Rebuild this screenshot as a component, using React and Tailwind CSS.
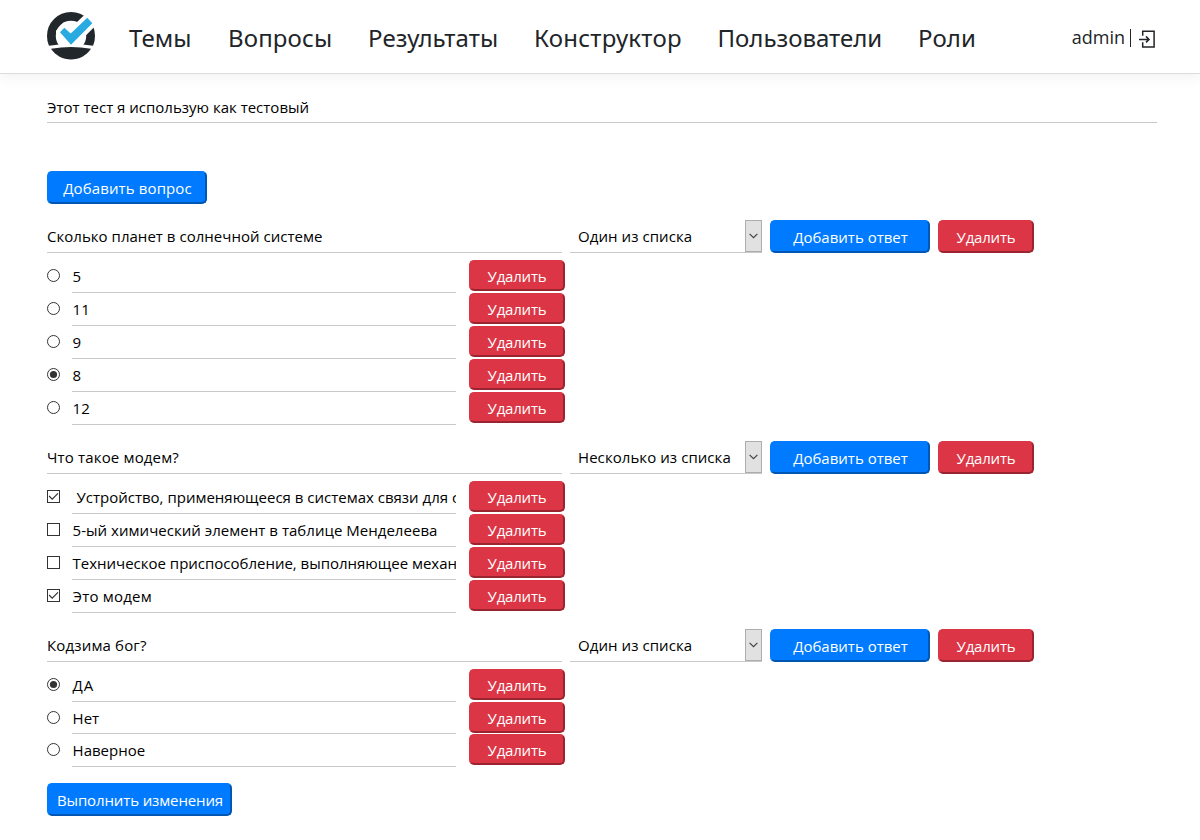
const NAV = [
  { label: 'Темы', cls: 'w-[99px] tracking-[0.1px]' },
  { label: 'Вопросы', cls: 'w-[140px] tracking-[0.15px]' },
  { label: 'Результаты', cls: 'w-[166px] tracking-[0.1px]' },
  { label: 'Конструктор', cls: 'w-[183.5px] tracking-[0.25px]' },
  { label: 'Пользователи', cls: 'w-[200.5px]' },
  { label: 'Роли', cls: 'w-[80px] tracking-[0.1px]' },
];

const QUESTIONS = [
  {
    title: 'Сколько планет в солнечной системе',
    titleCls: 'tracking-[0.03px]',
    type: 'radio',
    kind: 'Один из списка',
    answers: [
      { text: '5' },
      { text: '11' },
      { text: '9' },
      { text: '8', on: true },
      { text: '12' },
    ],
  },
  {
    title: 'Что такое модем?',
    titleCls: 'tracking-[0.16px]',
    type: 'checkbox',
    kind: 'Несколько из списка',
    answers: [
      { text: ' Устройство, применяющееся в системах связи для с', on: true },
      { text: '5-ый химический элемент в таблице Менделеева', cls: 'tracking-[0.03px]' },
      { text: 'Техническое приспособление, выполняющее механ', cls: 'tracking-[-0.01px]' },
      { text: 'Это модем', on: true, cls: 'tracking-[0.2px]' },
    ],
  },
  {
    title: 'Кодзима бог?',
    titleCls: 'tracking-[0.16px]',
    type: 'radio',
    kind: 'Один из списка',
    answers: [
      { text: 'ДА', on: true, cls: 'tracking-[0.8px]' },
      { text: 'Нет', row: 'h-8', cls: 'pt-[2px]' },
      { text: 'Наверное' },
    ],
  },
];

function Logo() {
  return (
    <svg className="mb-px h-12 w-12 shrink-0" viewBox="0 0 48 48">
      <clipPath id="above">
        <rect x="9" y="-4" width="44" height="36" />
      </clipPath>
      <circle cx="24" cy="24" r="19.6" fill="none" stroke="#22272c" strokeWidth="8.8" />
      <path d="M-1 34.3 Q24 29.6 49 34.3 V49 H-1 Z" fill="#fff" />
      <path d="M4 36.8 Q24 33 44 36.8 A24 24 0 0 1 4 36.8 Z" fill="#22272c" />
      <path
        d="M13 20.3 17.3 15.7 23.7 21.6 40.3 5.7 45.3 11.3 24 32.7Z"
        fill="#fff"
        stroke="#fff"
        strokeWidth="8"
        clipPath="url(#above)"
      />
      <path d="M13 20.3 17.3 15.7 23.7 21.4 40.3 5.7 45.3 11.3 24 32.7Z" fill="#29abe2" />
    </svg>
  );
}

function LogoutIcon() {
  return (
    <svg className="mt-[4px] h-[18px] w-4" viewBox="0 0 16 18" fill="none" stroke="#212529" strokeWidth="1.5">
      <path d="M3.7 5.8V1.2H15.1V17.1H3.7V12.2" />
      <path d="M0 9.4H9.8M7 6.4 10 9.4 7 12.4" />
    </svg>
  );
}

function Button({ color = 'blue', className, children }) {
  const tone =
    color === 'red'
      ? 'bg-[#dc3545] border-t-[#dc3545] border-l-[#dc3545] border-r-[#9a2530] border-b-[#9a2530]'
      : 'bg-[#007bff] border-t-[#007bff] border-l-[#007bff] border-r-[#0056b3] border-b-[#0056b3]';
  return (
    <button
      type="button"
      className={`flex shrink-0 items-center justify-center rounded-[5px] border-2 pt-[2px] leading-none whitespace-nowrap text-white ${tone} ${className}`}
    >
      {children}
    </button>
  );
}

function Mark({ type, on }) {
  return (
    <svg className="mt-[9px] h-[13px] w-[13px] shrink-0" viewBox="0 0 13 13" fill="none" stroke="#333">
      {type === 'radio' ? (
        <>
          <circle cx="6.5" cy="6.5" r="6" />
          {on && <circle cx="6.5" cy="6.5" r="3.6" fill="#333" stroke="none" />}
        </>
      ) : (
        <>
          <rect x="0.5" y="0.5" width="12" height="12" />
          {on && <path d="M2.1 6 5.2 9.1 11 3.3" strokeWidth="1.2" />}
        </>
      )}
    </svg>
  );
}

function Select({ value }) {
  return (
    <div className="ml-2 flex h-[33px] w-48 border-b border-[#c8c8c8] pl-2">
      <span className="flex-1 leading-8 tracking-[0.07px] whitespace-nowrap">{value}</span>
      <span className="flex w-[17px] items-center justify-center border border-[#adadad] bg-[#e1e1e1]">
        <svg className="mr-px h-[6px] w-[9px]" viewBox="0 0 9 6" fill="none" stroke="#444" strokeWidth="1.2">
          <path d="M0.6 0.8 4.5 4.7 8.4 0.8" />
        </svg>
      </span>
    </div>
  );
}

function Question({ title, titleCls, type, kind, answers }) {
  return (
    <section className="mb-4">
      <div className="mb-[7px] flex">
        <div className={`h-[33px] w-[515px] border-b border-[#c8c8c8] leading-8 ${titleCls}`}>{title}</div>
        <Select value={kind} />
        <Button className="ml-2 h-[33px] w-40 pl-px">Добавить ответ</Button>
        <Button color="red" className="ml-2 h-[33px] w-24 tracking-[-0.2px]">
          Удалить
        </Button>
      </div>
      {answers.map(({ text, on, row = 'h-[33px]', cls = '' }) => (
        <div key={text} className={`flex ${row}`}>
          <Mark type={type} on={on} />
          <div
            className={`ml-3 flex w-96 items-center overflow-hidden border-b border-[#c8c8c8] pl-[0.6px] whitespace-pre ${cls}`}
          >
            {text}
          </div>
          <Button color="red" className="ml-[13px] h-[31px] w-24 tracking-[-0.2px]">
            Удалить
          </Button>
        </div>
      ))}
    </section>
  );
}

export default function App() {
  return (
    <div className="min-h-[840px] bg-white font-['Open_Sans','Noto_Sans',sans-serif] text-[15px] text-black">
      <header className="flex h-[74px] items-center border-b border-[#dcdcdc] pr-[45px] pl-[47px] text-[#212529] shadow-[0_4px_12px_rgba(0,0,0,0.05)]">
        <Logo />
        <nav className="ml-[34px] flex pt-[3px] font-['Noto_Sans','Open_Sans',sans-serif] text-[24px] leading-9">
          {NAV.map(({ label, cls }) => (
            <a key={label} className={cls}>
              {label}
            </a>
          ))}
        </nav>
        <div className="ml-auto flex items-center text-lg leading-6">
          <span>admin</span>
          <span className="mr-[8px] ml-[5px] mt-[3px] h-[18px] w-px bg-[#212529]" />
          <LogoutIcon />
        </div>
      </header>
      <main className="px-[43px] pl-[47px]">
        <div className="mt-[17px] h-8 border-b border-[#c8c8c8] leading-8">
          Этот тест я использую как тестовый
        </div>
        <Button className="mt-12 mb-4 h-[33px] w-40 tracking-[0.12px] pl-px">Добавить вопрос</Button>
        {QUESTIONS.map((q) => (
          <Question key={q.title} {...q} />
        ))}
        <Button className="h-[33px] w-[185px] pl-px tracking-[-0.12px]">Выполнить изменения</Button>
      </main>
    </div>
  );
}
